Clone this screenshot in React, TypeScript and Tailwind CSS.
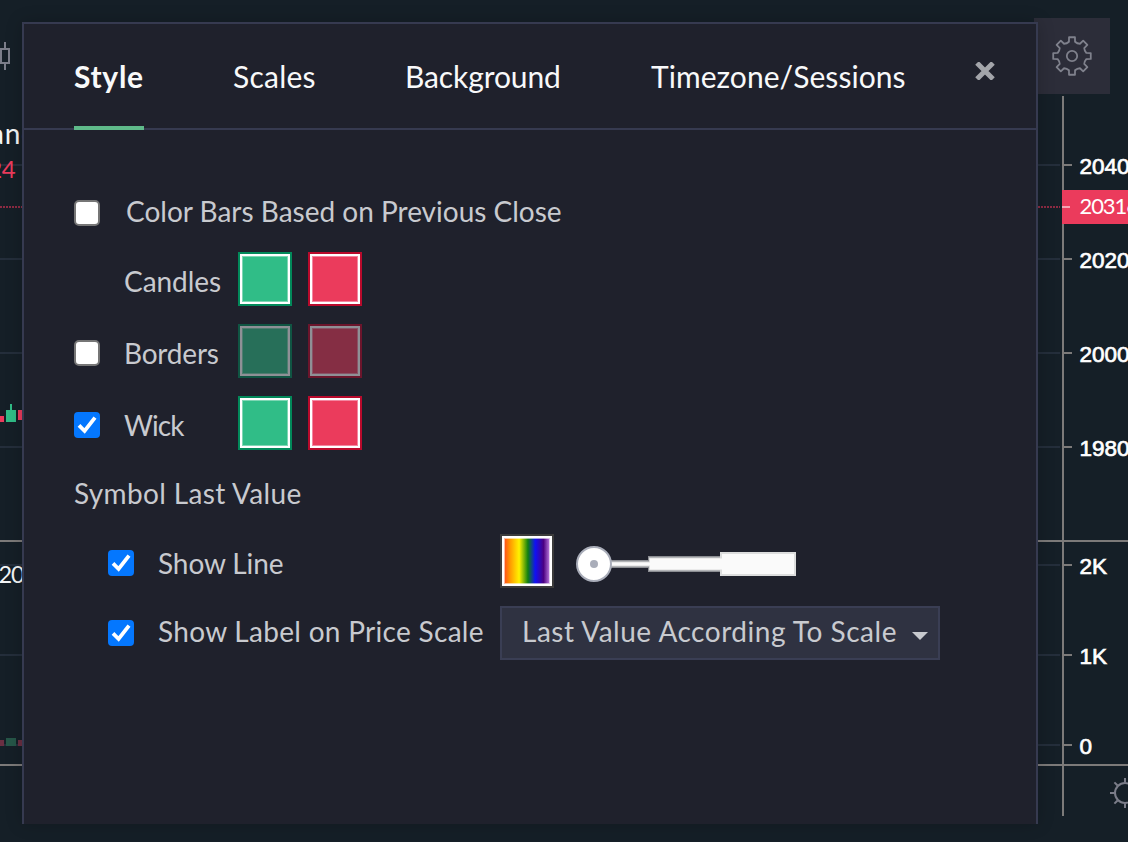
import type { ReactNode } from "react";

const GRID_Y = [165, 259, 353, 447, 565, 655, 745];
const PRICE_LABELS = [
  { text: "2040", y: 173.5 },
  { text: "2020", y: 267.5 },
  { text: "2000", y: 361.5 },
  { text: "1980", y: 455.5 },
  { text: "2K", y: 573.5 },
  { text: "1K", y: 663.5 },
  { text: "0", y: 753.5 },
];

function polar(r: number, deg: number) {
  const a = ((deg - 90) * Math.PI) / 180;
  return `${(r * Math.cos(a)).toFixed(2)} ${(r * Math.sin(a)).toFixed(2)}`;
}

const GEAR_PATH =
  [0, 45, 90, 135, 180, 225, 270, 315]
    .map(
      (a, i) =>
        `${i === 0 ? "M" : "L"}${polar(14.6, a - 12)} L${polar(19, a - 9)} L${polar(19, a + 9)} L${polar(14.6, a + 12)} Q${polar(13.4, a + 22.5)} ${polar(14.6, a + 33)}`,
    )
    .join(" ") + "Z";

function Chart() {
  return (
    <svg className="block" width="1128" height="842" viewBox="0 0 1128 842">
      <rect width="1128" height="842" fill="#151f27" />

      {GRID_Y.map((y) => (
        <g key={y}>
          <rect x="0" y={y - 1} width="1060" height="2" fill="#242e3b" />
          <rect x="1064" y={y - 1} width="8" height="2" fill="#7c7a79" />
        </g>
      ))}
      <path d="M0 207H1060" stroke="#8c2b43" strokeWidth="2" strokeDasharray="2 1" />

      <rect x="0" y="540" width="1128" height="2" fill="#7c7a79" />
      <rect x="0" y="764" width="1128" height="2" fill="#7c7a79" />
      <rect x="1062" y="96" width="2" height="720" fill="#7c7a79" />

      <g fill="none" stroke="#7b7d89" strokeWidth="2">
        <path d="M5 42V48M5 63V70" />
        <rect x="1" y="49" width="8" height="14" />
      </g>

      <rect x="0" y="416" width="4" height="6" fill="#eb3b5c" />
      <rect x="10" y="404" width="2" height="8" fill="#30bd87" />
      <rect x="6" y="410" width="10" height="12" fill="#30bd87" />
      <rect x="18" y="410" width="6" height="10" fill="#eb3b5c" />
      <rect x="0" y="740" width="4" height="6" fill="#6a2f42" />
      <rect x="6" y="738" width="10" height="8" fill="#265648" />
      <rect x="18" y="740" width="6" height="6" fill="#6a2f42" />

      <g className="font-['Lato',sans-serif]">
        <text x="-10" y="144" fontSize="28" letterSpacing="0.9" fill="#f4f6f7">anc</text>
        <text x="-17" y="178" fontSize="24" letterSpacing="-0.4" fill="#eb3b5c">.24</text>
        <text x="-1.5" y="583" fontSize="23.5" letterSpacing="-1.2" fill="#f4f6f7">20</text>
      </g>

      <g className="font-['Liberation_Sans',sans-serif]" fill="#ffffff" stroke="#ffffff" strokeWidth="0.7">
        {PRICE_LABELS.map((l) => (
          <text key={l.text} x="1079.5" y={l.y} fontSize="22.5">
            {l.text}
          </text>
        ))}
      </g>

      <rect x="1062" y="190" width="66" height="34" fill="#eb3b5c" />
      <rect x="1062" y="206" width="8" height="2" fill="#f5a3b2" />
      <text x="1079.5" y="214" fontSize="22" letterSpacing="-1.1" fill="#ffffff" className="font-['Lato',sans-serif]">
        20316
      </text>

      <rect x="1034" y="18" width="76" height="76" fill="#2c2d39" />
      <g transform="translate(1072 56)" fill="none" stroke="#7f818c" strokeWidth="1.8" strokeLinejoin="round">
        <path d={GEAR_PATH} />
        <circle r="5.2" />
      </g>

      <g transform="translate(1125 793)" fill="none" stroke="#7b7d89" strokeWidth="2">
        <circle r="10" />
        {[0, 45, 90, 135, 180, 225, 270, 315].map((a) => (
          <path key={a} d={`M${polar(10.5, a)} L${polar(15, a)}`} />
        ))}
      </g>
    </svg>
  );
}

function Checkbox({ checked = false }: { checked?: boolean }) {
  return checked ? (
    <div role="checkbox" aria-checked="true" className="h-[26px] w-[26px] shrink-0 rounded-[4px] bg-[#0477fe]">
      <svg width="26" height="26" viewBox="0 0 26 26" fill="none" stroke="#fff" strokeWidth="3.8">
        <path d="M5 13.4 10.6 19 21 5.6" />
      </svg>
    </div>
  ) : (
    <div role="checkbox" aria-checked="false" className="h-[26px] w-[26px] shrink-0 rounded-[5px] border-2 border-[#767676] bg-white" />
  );
}

const SWATCH_TONES = {
  green: { outer: "border-[#02895a]", fill: "bg-[#30bd87] border-[#7fd6b4]" },
  red: { outer: "border-[#b90a2c]", fill: "bg-[#eb3b5c] border-[#f386a0]" },
  rainbow: {
    outer: "border-[#3b3b3b]",
    fill: "border-white/60 bg-origin-border bg-[linear-gradient(90deg,#ff4a1a_0%,#ff9c00_14%,#fff200_33%,#108010_52%,#1010f5_68%,#4b0082_86%,#c080e0_100%)]",
  },
};

function Swatch({ tone, dim = false }: { tone: keyof typeof SWATCH_TONES; dim?: boolean }) {
  const t = SWATCH_TONES[tone];
  return (
    <div className={`h-[54px] w-[54px] shrink-0 border-2 ${t.outer} ${dim ? "opacity-50" : ""}`}>
      <div className="h-full w-full border-2 border-white">
        <div className={`h-full w-full border ${t.fill}`} />
      </div>
    </div>
  );
}

function ColorRow({
  label,
  tracking,
  box,
  dim,
}: {
  label: string;
  tracking: string;
  box?: ReactNode;
  dim?: boolean;
}) {
  return (
    <div className="flex h-[54px] items-center">
      <div className="mt-1 w-[50px]">{box}</div>
      <div className={`w-[114px] pt-1 whitespace-nowrap ${tracking}`}>{label}</div>
      <div className="flex gap-4">
        <Swatch tone="green" dim={dim} />
        <Swatch tone="red" dim={dim} />
      </div>
    </div>
  );
}

function WidthSlider() {
  return (
    <svg className="mt-1.5 ml-[22px]" width="222" height="36" viewBox="0 0 222 36">
      <path d="M34 14H72V10H144V6H220V30H144V26H72V22H34Z" fill="#8b8d92" />
      <path d="M34 15.5H73V11.5H144V6H220V30H144V24.5H73V20.5H34Z" fill="#dcdddd" />
      <path d="M34 16.5H74V12.5H146V8H218V28H146V23.5H74V19.5H34Z" fill="#fafafa" />
      <circle cx="18" cy="18" r="17" fill="#fff" stroke="#a9adb9" strokeWidth="2" />
      <circle cx="18" cy="18" r="4" fill="#a9adb9" />
    </svg>
  );
}

function Header() {
  return (
    <header className="flex h-[106px] items-start border-b-2 border-[#363a50] pl-[50px] text-[30px] leading-[36px] whitespace-nowrap text-[#f8f9fa]">
      <div className="h-[106px] w-[70px] border-b-4 border-[#5fba8a] pt-[34px] font-bold tracking-[0.7px]">Style</div>
      <div className="ml-[89px] w-[84px] pt-[34px] tracking-[0.25px]">Scales</div>
      <div className="ml-[88px] w-[158px] pt-[34px] tracking-[-0.1px]">Background</div>
      <div className="ml-[88px] w-[256px] pt-[34px] tracking-[0.05px]">Timezone/Sessions</div>
      <svg className="mt-[38px] ml-[68px]" width="20" height="18" viewBox="0 0 20 18" stroke="#a3a5aa" strokeWidth="5">
        <path d="M2 1 18 17M18 1 2 17" />
      </svg>
    </header>
  );
}

export default function App() {
  return (
    <div className="relative h-[842px] w-[1128px] overflow-hidden bg-[#151f27]">
      <Chart />
      <section className="absolute top-[22px] left-[22px] h-[802px] w-[1016px] border-x-2 border-t-2 border-[#363a50] bg-[#1f212c] font-['Lato',sans-serif] shadow-[0_0_16px_rgba(0,0,0,0.2)]">
        <Header />
        <div className="flex flex-col pt-[70px] pl-[50px] text-[28px] leading-[34px] text-[#c8cacf]">
          <div className="flex h-[26px] items-center gap-[26px]">
            <Checkbox />
            <span className="pb-1">Color Bars Based on Previous Close</span>
          </div>
          <div className="mt-[26px] flex flex-col gap-[18px]">
            <ColorRow label="Candles" tracking="tracking-[-0.05px]" />
            <ColorRow label="Borders" tracking="tracking-[-0.2px]" box={<Checkbox />} dim />
            <ColorRow label="Wick" tracking="tracking-[-0.9px]" box={<Checkbox checked />} />
          </div>
          <div className="mt-[26px] h-[34px] tracking-[0.35px]">Symbol Last Value</div>
          <div className="mt-[24px] flex h-[54px] items-center pl-[34px]">
            <div className="mt-1 w-[50px]">
              <Checkbox checked />
            </div>
            <div className="w-[342px] pt-1 tracking-[-0.1px]">Show Line</div>
            <Swatch tone="rainbow" />
            <WidthSlider />
          </div>
          <div className="mt-[18px] flex h-[54px] items-center pl-[34px]">
            <div className="w-[50px]">
              <Checkbox checked />
            </div>
            <div className="w-[342px] pb-1 tracking-[0.3px] whitespace-nowrap">Show Label on Price Scale</div>
            <div className="flex h-[54px] w-[440px] items-center justify-between border-2 border-[#3a3e54] bg-[#2f3241] pr-[10px] pl-[20px]">
              <span className="pb-1 tracking-[0.52px] whitespace-nowrap">Last Value According To Scale</span>
              <svg className="mt-[6px]" width="16" height="8" viewBox="0 0 16 8">
                <path d="M0 0H16L8 8Z" fill="#c8cacf" />
              </svg>
            </div>
          </div>
        </div>
      </section>
    </div>
  );
}
